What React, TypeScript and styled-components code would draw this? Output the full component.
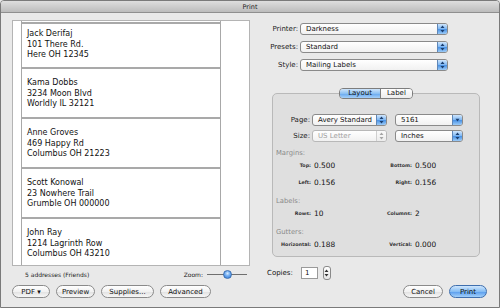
import React from 'react';
import styled, { createGlobalStyle } from 'styled-components';

const GlobalStyle = createGlobalStyle`
  html, body {
    margin: 0;
    padding: 0;
    background: #e8e8e8;
  }
  body {
    font-family: "DejaVu Sans", sans-serif;
    color: #111;
  }
`;

const Window = styled.div`
  width: 500px;
  height: 308px;
  box-sizing: border-box;
  border: 1px solid #7a7a7a;
  border-radius: 4px 4px 0 0;
  background: #e9e9e9;
  display: flex;
  flex-direction: column;
  overflow: hidden;
`;

const TitleBar = styled.div`
  height: 11px;
  flex-shrink: 0;
  border-bottom: 1px solid #8f8f8f;
  background: linear-gradient(#dedede, #bcbcbc);
  display: flex;
  align-items: center;
  justify-content: center;
  font-size: 6.5px;
  color: #222;
`;

const Body = styled.div`
  display: flex;
  height: 269px;
`;

const LeftPane = styled.div`
  width: 238px;
  margin-left: 11px;
  display: flex;
  flex-direction: column;
`;

const Page = styled.div`
  margin-top: 7px;
  height: 246px;
  box-sizing: border-box;
  background: #fff;
  border: 1px solid #b4b4b4;
  padding-left: 8px;
  overflow: hidden;
`;

const LabelColumn = styled.div`
  width: 200px;
  height: 100%;
  box-sizing: border-box;
  border-left: 1px solid #a8a8a8;
  border-right: 1px solid #a8a8a8;
  padding-top: 1px;
`;

const AddressLabel = styled.div<{ $first?: boolean }>`
  height: ${p => (p.$first ? 45 : 50)}px;
  box-sizing: border-box;
  border-top: 2px solid #a9a9a9;
  padding: ${p => (p.$first ? 5 : 9)}px 0 0 5px;
  font-size: 8px;
  line-height: 10.6px;
  color: #111;
`;

const StatusRow = styled.div`
  height: 16px;
  display: flex;
  align-items: center;
  font-size: 6px;
  color: #222;
  padding-left: 13px;
`;

const ZoomLabel = styled.span`
  margin-left: auto;
  margin-right: 4px;
`;

const Slider = styled.div`
  width: 40px;
  height: 9px;
  display: flex;
  align-items: center;
  justify-content: center;
  background: linear-gradient(transparent 4px, #6f6f6f 4px, #6f6f6f 5px, transparent 5px);
  margin-right: 3px;
`;

const Knob = styled.div`
  width: 9px;
  height: 9px;
  border-radius: 50%;
  box-sizing: border-box;
  border: 1px solid #3c6fb0;
  background: radial-gradient(circle at 50% 35%, #d6ebff 0%, #6eaaf0 45%, #2f78d6 100%);
`;

const RightPane = styled.div`
  flex: 1;
  display: flex;
  flex-direction: column;
  padding-top: 10px;
`;

const FormGrid = styled.div`
  display: grid;
  grid-template-columns: 36px 148px;
  column-gap: 2px;
  row-gap: 6px;
  margin-left: 12px;
`;

const FieldLabel = styled.span`
  font-size: 7px;
  line-height: 12px;
  text-align: right;
  color: #1a1a1a;
`;

const SelectBox = styled.div<{ $w: number; $disabled?: boolean }>`
  width: ${p => p.$w}px;
  height: 12px;
  box-sizing: border-box;
  border: 1px solid ${p => (p.$disabled ? '#b8b8b8' : '#8a8a8a')};
  border-radius: 3px;
  background: linear-gradient(#ffffff, #f1f1f1);
  display: flex;
  align-items: center;
  font-size: 7px;
  color: ${p => (p.$disabled ? '#a0a0a0' : '#111')};
  padding-left: 5px;
  overflow: hidden;
`;

const Cap = styled.div<{ $disabled?: boolean }>`
  margin-left: auto;
  width: 9px;
  align-self: stretch;
  display: flex;
  align-items: center;
  justify-content: center;
  border-left: 1px solid ${p => (p.$disabled ? '#cfcfcf' : '#5f87b8')};
  background: ${p =>
    p.$disabled
      ? 'linear-gradient(#fafafa, #ececec)'
      : 'linear-gradient(#cfe6fd, #7db6f2 50%, #4e95e6 55%, #9ccbf7)'};
`;

const GroupWrap = styled.div`
  margin: 17px 0 0 22px;
  width: 208px;
  display: flex;
  flex-direction: column;
  align-items: center;
`;

const Tabs = styled.div`
  position: relative;
  z-index: 1;
  display: flex;
  height: 11px;
  border: 1px solid #7d7d7d;
  border-radius: 4px;
  overflow: hidden;
  box-sizing: border-box;
`;

const Tab = styled.div<{ $active?: boolean }>`
  font-size: 7px;
  line-height: 9px;
  padding: 0 ${p => (p.$active ? 8 : 6)}px;
  color: #111;
  background: ${p =>
    p.$active
      ? 'linear-gradient(#cfe5fb, #8cc0f3 50%, #6aaaf0 55%, #a6d0f8)'
      : 'linear-gradient(#ffffff, #ececec)'};
  & + & {
    border-left: 1px solid #7d7d7d;
  }
`;

const GroupBox = styled.div`
  margin-top: -6px;
  width: 100%;
  height: 164px;
  box-sizing: border-box;
  border: 1px solid #b9b9b9;
  border-radius: 5px;
  background: #dfdfdf;
  padding: 20px 0 0 3px;
`;

const PageGrid = styled.div`
  display: grid;
  grid-template-columns: 34px 75px 68px;
  column-gap: 2px;
  row-gap: 4px;
  & > :nth-child(3n) {
    margin-left: 6px;
  }
`;

const Heading = styled.div`
  margin-top: 6px;
  height: 10px;
  line-height: 10px;
  font-size: 6.8px;
  color: #8a8a8a;
`;

const MeasureGrid = styled.div`
  margin-top: 1px;
  display: grid;
  grid-template-columns: 35px 47px 48px 1fr;
  grid-auto-rows: 14px;
  column-gap: 3px;
  row-gap: 3px;
`;

const SmallLabel = styled.span`
  font-size: 4.8px;
  font-weight: bold;
  line-height: 14px;
  text-align: right;
  color: #333;
`;

const Value = styled.span`
  font-size: 7.4px;
  line-height: 14px;
  color: #111;
`;

const CopiesRow = styled.div`
  margin: 9px 0 0 17px;
  display: flex;
  align-items: center;
  height: 14px;
  font-size: 7px;
`;

const CopiesInput = styled.div`
  margin-left: 8px;
  width: 17px;
  height: 12px;
  box-sizing: border-box;
  border: 1px solid #9a9a9a;
  background: #fff;
  font-size: 7px;
  line-height: 10px;
  padding-left: 3px;
`;

const Stepper = styled.div`
  margin-left: 5px;
  width: 8px;
  height: 14px;
  box-sizing: border-box;
  border: 1px solid #8a8a8a;
  border-radius: 3px;
  background: linear-gradient(#ffffff, #e6e6e6);
  display: flex;
  align-items: center;
  justify-content: center;
`;

const Footer = styled.div`
  display: flex;
  align-items: center;
  gap: 6px;
  padding: 2px 12px 0 11px;
  height: 15px;
`;

const Button = styled.div<{ $w: number; $primary?: boolean }>`
  width: ${p => p.$w}px;
  height: 13px;
  box-sizing: border-box;
  border: 1px solid ${p => (p.$primary ? '#3f6fae' : '#8a8a8a')};
  border-radius: 7px;
  display: flex;
  align-items: center;
  justify-content: center;
  font-size: 7px;
  color: #111;
  background: ${p =>
    p.$primary
      ? 'linear-gradient(#cfe6fd, #85bdf4 50%, #5c9fee 55%, #a3d0fa)'
      : 'linear-gradient(#ffffff, #f1f1f1 50%, #e2e2e2 55%, #f7f7f7)'};
`;

const Spacer = styled.div`
  flex: 1;
`;

const UpDown = ({ color = '#1b3f70' }: { color?: string }) => (
  <svg width="5" height="8" viewBox="0 0 5 8">
    <path d="M2.5 0.5 L4.5 3 L0.5 3 Z M2.5 7.5 L4.5 5 L0.5 5 Z" fill={color} />
  </svg>
);

const Down = () => (
  <svg width="5" height="4" viewBox="0 0 5 4">
    <path d="M0.5 0.8 L4.5 0.8 L2.5 3.5 Z" fill="#1b3f70" />
  </svg>
);

type SelectProps = { value: string; w: number; disabled?: boolean; combo?: boolean };

const Select = ({ value, w, disabled, combo }: SelectProps) => (
  <SelectBox $w={w} $disabled={disabled}>
    {value}
    <Cap $disabled={disabled}>{combo ? <Down /> : <UpDown color={disabled ? '#a5a5a5' : '#1b3f70'} />}</Cap>
  </SelectBox>
);

const addresses = [
  ['Jack Derifaj', '101 There Rd.', 'Here OH 12345'],
  ['Kama Dobbs', '3234 Moon Blvd', 'Worldly IL 32121'],
  ['Anne Groves', '469 Happy Rd', 'Columbus OH 21223'],
  ['Scott Konowal', '23 Nowhere Trail', 'Grumble OH 000000'],
  ['John Ray', '1214 Lagrinth Row', 'Columbus OH 43210'],
];

const sections = [
  { title: 'Margins:', rows: [['Top:', '0.500', 'Bottom:', '0.500'], ['Left:', '0.156', 'Right:', '0.156']] },
  { title: 'Labels:', rows: [['Rows:', '10', 'Columns:', '2']] },
  { title: 'Gutters:', rows: [['Horizontal:', '0.188', 'Vertical:', '0.000']] },
];

export default function App() {
  return (
    <>
      <GlobalStyle />
      <Window>
        <TitleBar>Print</TitleBar>
        <Body>
          <LeftPane>
            <Page>
              <LabelColumn>
                {addresses.map((a, i) => (
                  <AddressLabel key={a[0]} $first={i === 0}>
                    {a.map(line => (
                      <div key={line}>{line}</div>
                    ))}
                  </AddressLabel>
                ))}
              </LabelColumn>
            </Page>
            <StatusRow>
              5 addresses (Friends)
              <ZoomLabel>Zoom:</ZoomLabel>
              <Slider>
                <Knob />
              </Slider>
            </StatusRow>
          </LeftPane>
          <RightPane>
            <FormGrid>
              <FieldLabel>Printer:</FieldLabel>
              <Select value="Darkness" w={148} />
              <FieldLabel>Presets:</FieldLabel>
              <Select value="Standard" w={148} />
              <FieldLabel>Style:</FieldLabel>
              <Select value="Mailing Labels" w={148} />
            </FormGrid>
            <GroupWrap>
              <Tabs>
                <Tab $active>Layout</Tab>
                <Tab>Label</Tab>
              </Tabs>
              <GroupBox>
                <PageGrid>
                  <FieldLabel>Page:</FieldLabel>
                  <Select value="Avery Standard" w={75} />
                  <Select value="5161" w={68} combo />
                  <FieldLabel>Size:</FieldLabel>
                  <Select value="US Letter" w={75} disabled />
                  <Select value="Inches" w={68} />
                </PageGrid>
                {sections.map(s => (
                  <React.Fragment key={s.title}>
                    <Heading>{s.title}</Heading>
                    <MeasureGrid>
                      {s.rows.map(r => (
                        <React.Fragment key={r[0]}>
                          <SmallLabel>{r[0]}</SmallLabel>
                          <Value>{r[1]}</Value>
                          <SmallLabel>{r[2]}</SmallLabel>
                          <Value>{r[3]}</Value>
                        </React.Fragment>
                      ))}
                    </MeasureGrid>
                  </React.Fragment>
                ))}
              </GroupBox>
            </GroupWrap>
            <CopiesRow>
              Copies:
              <CopiesInput>1</CopiesInput>
              <Stepper>
                <UpDown color="#333" />
              </Stepper>
            </CopiesRow>
          </RightPane>
        </Body>
        <Footer>
          <Button $w={38}>PDF ▾</Button>
          <Button $w={39}>Preview</Button>
          <Button $w={53}>Supplies...</Button>
          <Button $w={51}>Advanced</Button>
          <Spacer />
          <Button $w={40}>Cancel</Button>
          <Button $w={38} $primary>
            Print
          </Button>
        </Footer>
      </Window>
    </>
  );
}
